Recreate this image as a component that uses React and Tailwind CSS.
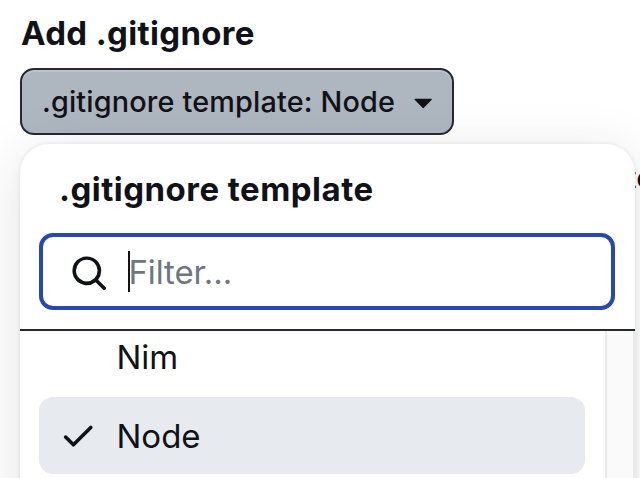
import clsx from "clsx";

// ─── Icons ───────────────────────────────────────────────────────────────────

const paths = {
  search:
    "M10.68 11.74a6 6 0 0 1-7.922-8.982 6 6 0 0 1 8.982 7.922l3.04 3.04a.749.749 0 0 1-.326 1.275.749.749 0 0 1-.734-.215ZM11.5 7a4.499 4.499 0 1 0-8.997 0A4.499 4.499 0 0 0 11.5 7Z",
  check:
    "M13.78 4.22a.75.75 0 0 1 0 1.06l-7.25 7.25a.75.75 0 0 1-1.06 0L2.22 9.28a.751.751 0 0 1 .018-1.042.751.751 0 0 1 1.042-.018L6 10.94l6.72-6.72a.75.75 0 0 1 1.06 0Z",
  triangle:
    "m4.427 7.427 3.396 3.396a.25.25 0 0 0 .354 0l3.396-3.396A.25.25 0 0 0 11.396 7H4.604a.25.25 0 0 0-.177.427Z",
};

function Icon({ name, className = "" }) {
  return (
    <svg
      viewBox="0 0 16 16"
      fill="currentColor"
      className={clsx("size-[38.4px] shrink-0", className)}
    >
      <path d={paths[name]} />
    </svg>
  );
}

// ─── Option row ──────────────────────────────────────────────────────────────

function Option({ children, selected = false }) {
  return (
    <li
      role="option"
      aria-selected={selected}
      className={clsx(
        "flex h-[77px] shrink-0 items-center rounded-[14px] pl-5 text-[33px]",
        selected && "bg-[#e7eaef]"
      )}
    >
      <span className="w-[57.5px] shrink-0">{selected && <Icon name="check" />}</span>
      <span className="pt-[3px]">{children}</span>
    </li>
  );
}

// ─── Page ────────────────────────────────────────────────────────────────────

export default function App() {
  return (
    <div className="relative h-[478px] w-[640px] overflow-hidden bg-white pl-5 font-['Inter','Liberation_Sans',sans-serif] text-[#101217]">
      <h2 className="pt-[13px] pl-px text-[33px] leading-10 font-bold tracking-[0.34px]">
        Add .gitignore
      </h2>

      <button className="mt-[15px] flex h-[67px] w-[434px] items-center rounded-[14px] border-2 border-[#25292e] bg-[#aeb6c0] pl-5 shadow-[inset_0_2px_0_#bcc3cd]">
        <span className="w-[362px] text-left text-[28.8px] font-medium tracking-[0.17px] whitespace-nowrap">
          .gitignore template: Node
        </span>
        <Icon name="triangle" />
      </button>

      {/* Label of the page behind, mostly covered by the menu */}
      <span className="absolute top-[160px] left-[627px] text-[28.8px] leading-9">te</span>

      {/* Menu */}
      <div className="relative mt-[9px] flex h-[520px] w-[615px] flex-col overflow-hidden rounded-[29px] bg-white shadow-[0_10px_55px_rgba(37,41,46,0.13),0_0_4px_rgba(37,41,46,0.10)]">
        <div className="flex h-[187px] shrink-0 flex-col border-b-2 border-[#25292e] px-[19px] pt-[25px]">
          <h3 className="pl-5 text-[33px] leading-10 font-bold tracking-[0.48px]">
            .gitignore template
          </h3>
          <div className="mt-[24px] flex h-[77px] w-[576px] items-center rounded-[14px] border-4 border-[#2848b0] pl-[27px]">
            <Icon name="search" className="mt-[3px]" />
            <span className="ml-5 h-[41px] w-0.5 bg-[#101217]" />
            <span className="-ml-[2px] pt-[3px] text-[33px] tracking-[-0.1px] text-[#6d7681]">Filter...</span>
          </div>
        </div>

        <div className="flex min-h-0 flex-1">
          <ul role="listbox" className="-mt-[13px] flex w-[585px] flex-col gap-0.5 pr-5 pl-[19px]">
            <Option>Nim</Option>
            <Option selected>Node</Option>
          </ul>
          <div className="w-[30px] border-x-2 border-[#e8e8e8] bg-[#fafafa]" />
        </div>
      </div>
    </div>
  );
}
